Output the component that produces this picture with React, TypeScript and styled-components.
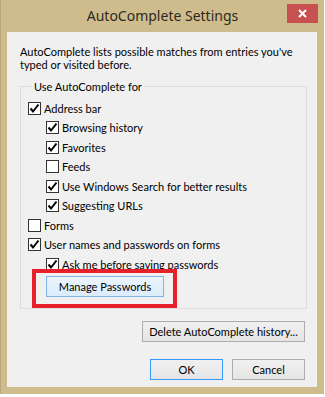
import styled, { createGlobalStyle } from "styled-components";

const GlobalStyle = createGlobalStyle`
  body {
    margin: 0;
    background: #ffffff;
    font-family: Lato, "Noto Sans", sans-serif;
    font-size: 11px;
    color: #000;
  }
`;

const Window = styled.div`
  width: 324px;
  height: 394px;
  box-sizing: border-box;
  background: #cfbc8d;
  border-left: 1px solid #b8a77a;
  display: flex;
  flex-direction: column;
`;

const TitleBar = styled.div`
  position: relative;
  height: 32px;
  display: flex;
  align-items: center;
  justify-content: center;
  font-family: "Noto Sans", sans-serif;
  font-size: 14px;
  color: #2e2a22;
  padding: 0 0 1px 0;
  box-sizing: border-box;
`;

const CloseButton = styled.div`
  position: absolute;
  top: 4px;
  left: 286px;
  width: 31px;
  height: 19px;
  background: #c75050;
  display: flex;
  align-items: center;
  justify-content: center;
`;

const Client = styled.div`
  flex: 1;
  margin: 0 7px 7px 6px;
  background: #f0f0f0;
  padding: 13px 10px 0 13px;
  display: flex;
  flex-direction: column;
`;

const Intro = styled.p`
  margin: 0 0 8.5px;
  line-height: 13px;
  white-space: nowrap;
`;

const Group = styled.fieldset`
  margin: 0;
  border: 1px solid #dcdcdc;
  padding: 6px 7px 11px;
  display: flex;
  flex-direction: column;
`;

const Legend = styled.legend`
  padding: 0 2px;
  margin-left: 4px;
  line-height: 13px;
`;

const Row = styled.label<{ $level: number }>`
  height: 19.5px;
  display: flex;
  align-items: center;
  gap: 3px;
  white-space: nowrap;
  padding-left: ${(p) => (p.$level === 2 ? 18 : 0)}px;
`;

const Box = styled.span`
  width: 13px;
  height: 13px;
  flex: none;
  box-sizing: border-box;
  border: 1px solid #333333;
  background: #ffffff;
  display: flex;
  align-items: center;
  justify-content: center;
`;

const ManageWrap = styled.div`
  position: relative;
  align-self: flex-start;
  margin: 2px 0 0 18px;
`;

const Highlight = styled.div`
  position: absolute;
  top: -7px;
  left: -14px;
  right: -13px;
  bottom: -11px;
  border: 4px solid #e8202a;
  pointer-events: none;
`;

const Button = styled.button<{ $variant?: "hover" | "default" }>`
  height: 21px;
  box-sizing: border-box;
  font: inherit;
  color: #000;
  padding: 0;
  white-space: nowrap;
  border: 1px solid
    ${(p) => (p.$variant === "hover" ? "#7eb4ea" : p.$variant === "default" ? "#3399ff" : "#acacac")};
  background: ${(p) =>
    p.$variant === "hover" ? "linear-gradient(#ecf4fc, #dcecfc)" : "linear-gradient(#f0f0f0, #e5e5e5)"};
  width: ${(p) => (p.$variant === "hover" ? "118px" : "73px")};
`;

const WideButton = styled(Button)`
  width: 163px;
`;

const ActionRow = styled.div<{ $top: number }>`
  display: flex;
  justify-content: flex-end;
  gap: 9px;
  margin-top: ${(p) => p.$top}px;
  padding-right: 2px;
`;

const Check = ({ on }: { on: boolean }) => (
  <Box>
    {on && (
      <svg width="11" height="11" viewBox="0 0 11 11">
        <polyline points="1.5,5.5 4,8.5 9.5,1.5" fill="none" stroke="#000" strokeWidth="2" />
      </svg>
    )}
  </Box>
);

const options: [string, boolean, number][] = [
  ["Address bar", true, 1],
  ["Browsing history", true, 2],
  ["Favorites", true, 2],
  ["Feeds", false, 2],
  ["Use Windows Search for better results", true, 2],
  ["Suggesting URLs", true, 2],
  ["Forms", false, 1],
  ["User names and passwords on forms", true, 1],
  ["Ask me before saving passwords", true, 2],
];

export default function App() {
  return (
    <>
      <GlobalStyle />
      <Window>
        <TitleBar>
          AutoComplete Settings
          <CloseButton>
            <svg width="9" height="9" viewBox="0 0 9 9">
              <path d="M1 1 L8 8 M8 1 L1 8" stroke="#fff" strokeWidth="2" />
            </svg>
          </CloseButton>
        </TitleBar>
        <Client>
          <Intro>
            AutoComplete lists possible matches from entries you've
            <br />
            typed or visited before.
          </Intro>
          <Group>
            <Legend>Use AutoComplete for</Legend>
            {options.map(([label, on, level]) => (
              <Row key={label} $level={level}>
                <Check on={on} />
                {label}
              </Row>
            ))}
            <ManageWrap>
              <Button $variant="hover">Manage Passwords</Button>
              <Highlight />
            </ManageWrap>
          </Group>
          <ActionRow $top={12}>
            <WideButton>Delete AutoComplete history...</WideButton>
          </ActionRow>
          <ActionRow $top={17}>
            <Button $variant="default">OK</Button>
            <Button>Cancel</Button>
          </ActionRow>
        </Client>
      </Window>
    </>
  );
}
